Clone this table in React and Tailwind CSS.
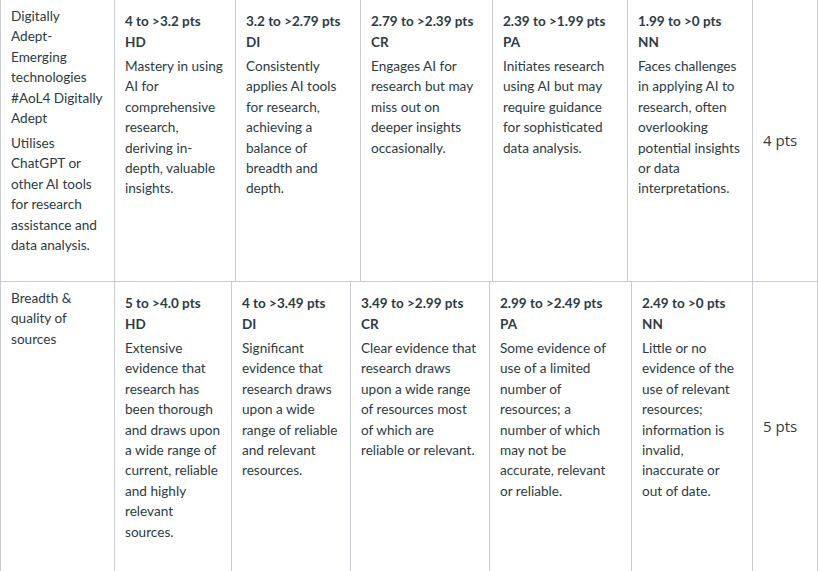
import React from 'react'

const ROWS = [
  {
    title: 'Digitally Adept-Emerging technologies #AoL4 Digitally Adept',
    long: 'Utilises ChatGPT or other AI tools for research assistance and data analysis.',
    points: '4 pts',
    height: 'h-[282px]',
    ratings: [
      { w: 'w-[121px]', range: '4 to >3.2 pts', code: 'HD', desc: 'Mastery in using AI for comprehensive research, deriving in-depth, valuable insights.' },
      { w: 'w-[125px]', range: '3.2 to >2.79 pts', code: 'DI', desc: 'Consistently applies AI tools for research, achieving a balance of breadth and depth.' },
      { w: 'w-[132px]', range: '2.79 to >2.39 pts', code: 'CR', desc: 'Engages AI for research but may miss out on deeper insights occasionally.' },
      { w: 'w-[135px]', range: '2.39 to >1.99 pts', code: 'PA', desc: 'Initiates research using AI but may require guidance for sophisticated data analysis.' },
      { w: 'w-[125px]', range: '1.99 to >0 pts', code: 'NN', desc: 'Faces challenges in applying AI to research, often overlooking potential insights or data interpretations.' },
    ],
  },
  {
    title: 'Breadth & quality of sources',
    long: '',
    points: '5 pts',
    height: 'h-[290px]',
    ratings: [
      { w: 'w-[117px]', range: '5 to >4.0 pts', code: 'HD', desc: 'Extensive evidence that research has been thorough and draws upon a wide range of current, reliable and highly relevant sources.', pr: 'pr-[8px]' },
      { w: 'w-[119px]', range: '4 to >3.49 pts', code: 'DI', desc: 'Significant evidence that research draws upon a wide range of reliable and relevant resources.' },
      { w: 'w-[139px]', range: '3.49 to >2.99 pts', code: 'CR', desc: 'Clear evidence that research draws upon a wide range of resources most of which are reliable or relevant.' },
      { w: 'w-[142px]', range: '2.99 to >2.49 pts', code: 'PA', desc: 'Some evidence of use of a limited number of resources; a number of which may not be accurate, relevant or reliable.', pr: 'pr-[13px]' },
      { w: 'w-[121px]', range: '2.49 to >0 pts', code: 'NN', desc: 'Little or no evidence of the use of relevant resources; information is invalid, inaccurate or out of date.' },
    ],
  },
]

function Rating({ rating }) {
  return (
    <div className={`${rating.w} ${rating.pr || 'pr-[11px]'} shrink-0 border-r border-[#c7cdd1] pl-[10px] pt-[11px]`}>
      <div className="text-[13.5px] font-bold leading-[21px] text-[#2d3b45]">{rating.range}</div>
      <div className="text-[13.5px] font-bold leading-[21px] text-[#2d3b45]">{rating.code}</div>
      <div className="mt-[3px] text-[13.6px] leading-[20.4px] text-[#2d3b45]">{rating.desc}</div>
    </div>
  )
}

export default function App() {
  return (
    <div className="w-[818px] bg-white font-['Lato',sans-serif]">
      {ROWS.map((row) => (
        <div key={row.title} className={`flex ${row.height} border-b border-[#c7cdd1]`}>
          <div className="w-[115px] shrink-0 border-x border-[#c7cdd1] pl-[10px] pr-[11.5px] pt-[6px] text-[13.6px] leading-[20.4px] text-[#2d3b45]">
            <div>{row.title}</div>
            {row.long && <div className="mt-[4.6px]">{row.long}</div>}
          </div>
          {row.ratings.map((r) => (
            <Rating key={r.range} rating={r} />
          ))}
          <div className="flex w-[65px] shrink-0 items-center border-r border-[#c7cdd1] pl-[10px] font-['Open_Sans',sans-serif] text-[15px] text-[#2d3b45]">
            {row.points}
          </div>
        </div>
      ))}
    </div>
  )
}
